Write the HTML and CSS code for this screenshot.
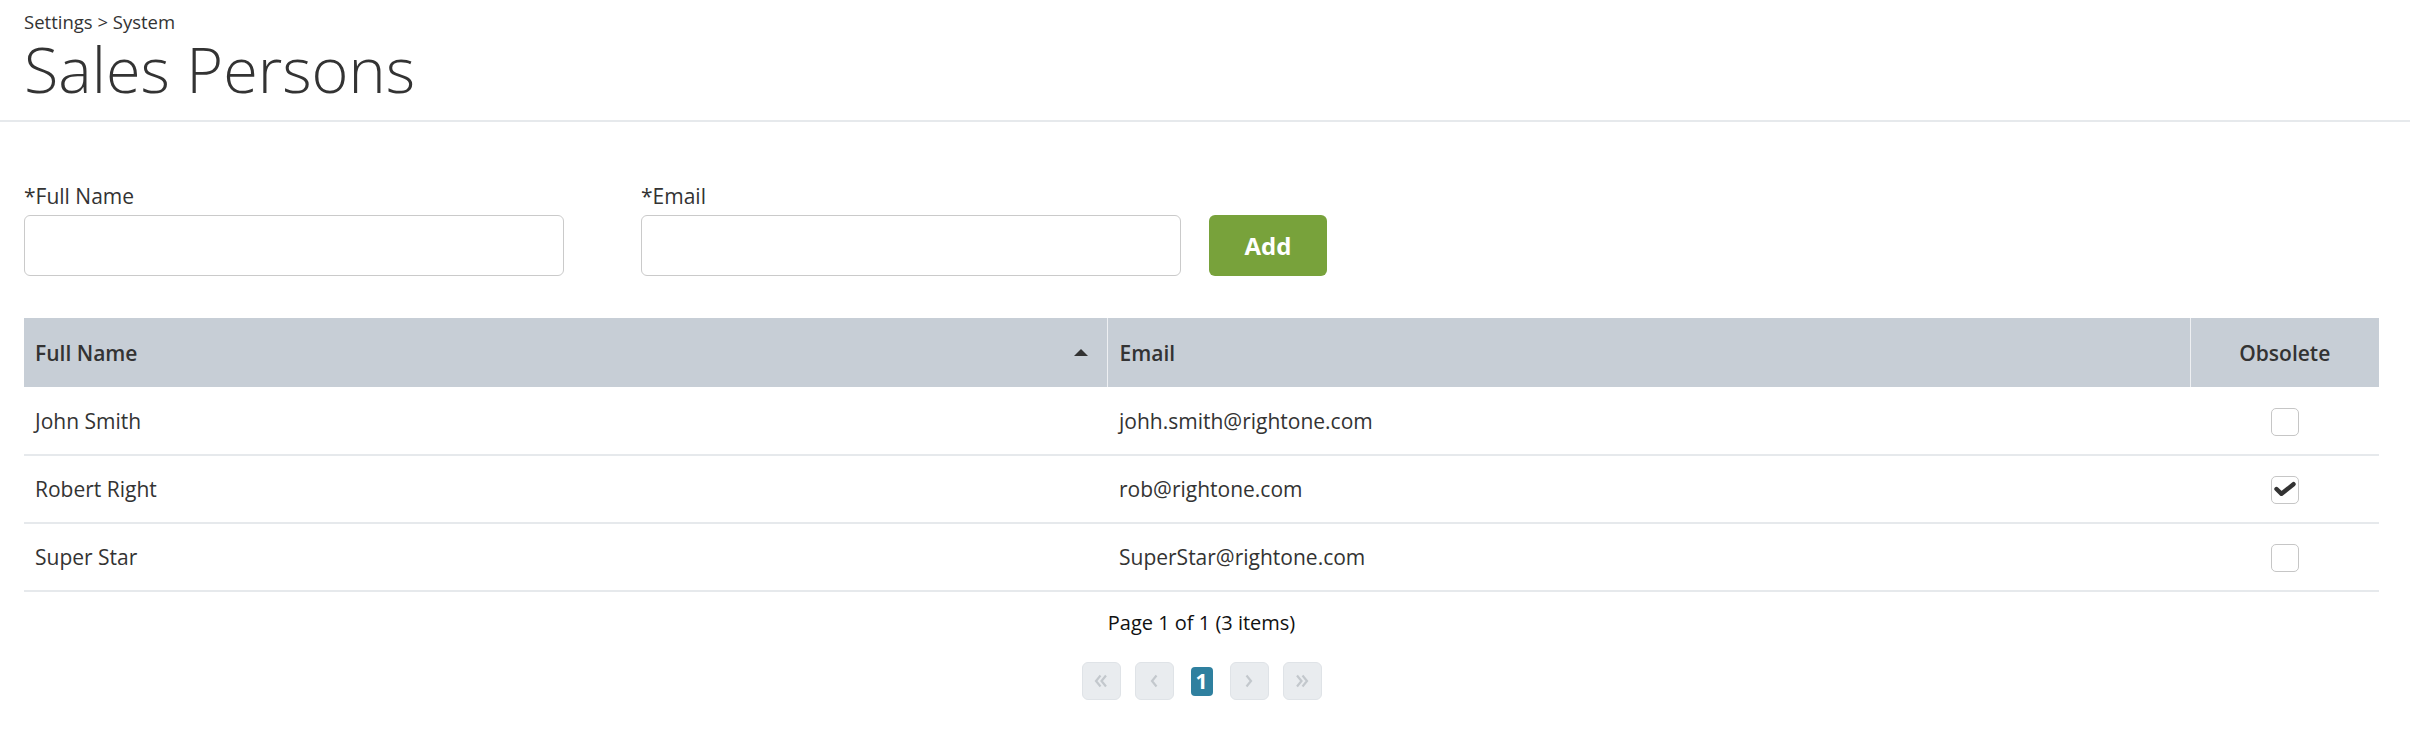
FILE: index.html
```html
<!DOCTYPE html>
<html lang="en">
<head>
<meta charset="utf-8">
<title>Sales Persons</title>
<link rel="stylesheet" href="styles.css">
</head>
<body>
<header class="page-header">
  <div class="breadcrumb">Settings &gt; System</div>
  <h1 class="page-title">Sales Persons</h1>
</header>
<main class="content">
  <form class="add-form">
    <div class="field field-name">
      <label class="field-label">*Full Name</label>
      <input class="field-input" type="text">
    </div>
    <div class="field field-email">
      <label class="field-label">*Email</label>
      <input class="field-input" type="text">
    </div>
    <button class="btn-add" type="button">Add</button>
  </form>

  <table class="grid">
    <colgroup>
      <col>
      <col>
      <col class="col-obsolete">
    </colgroup>
    <thead>
      <tr>
        <th class="th-name"><span class="th-inner"><span>Full Name</span><span class="sort-up"></span></span></th>
        <th class="th-email">Email</th>
        <th class="th-obsolete">Obsolete</th>
      </tr>
    </thead>
    <tbody>
      <tr>
        <td>John Smith</td>
        <td class="td-email">johh.smith@rightone.com</td>
        <td class="td-check"><span class="checkbox"></span></td>
      </tr>
      <tr>
        <td>Robert Right</td>
        <td class="td-email">rob@rightone.com</td>
        <td class="td-check"><span class="checkbox checked"><svg class="check-icon" viewBox="0 0 26 26" width="26" height="26"><path d="M4.5 12 L9.5 16.8 L21.5 7.2" fill="none" stroke="#333" stroke-width="4.4" stroke-linecap="round" stroke-linejoin="round"/></svg></span></td>
      </tr>
      <tr>
        <td>Super Star</td>
        <td class="td-email">SuperStar@rightone.com</td>
        <td class="td-check"><span class="checkbox"></span></td>
      </tr>
    </tbody>
  </table>

  <div class="pager">
    <div class="pager-info">Page 1 of 1 (3 items)</div>
    <div class="pager-nav">
      <span class="pager-btn"><svg viewBox="0 0 16 14" width="16" height="14"><path d="M7.5 1.5 L3 7 L7.5 12.5 M13 1.5 L8.5 7 L13 12.5" fill="none" stroke="#c3c8cd" stroke-width="2.2"/></svg></span>
      <span class="pager-btn"><svg viewBox="0 0 10 14" width="10" height="14"><path d="M7.5 1.5 L3 7 L7.5 12.5" fill="none" stroke="#c3c8cd" stroke-width="2.2"/></svg></span>
      <span class="pager-page">1</span>
      <span class="pager-btn"><svg viewBox="0 0 10 14" width="10" height="14"><path d="M2.5 1.5 L7 7 L2.5 12.5" fill="none" stroke="#c3c8cd" stroke-width="2.2"/></svg></span>
      <span class="pager-btn"><svg viewBox="0 0 16 14" width="16" height="14"><path d="M3 1.5 L7.5 7 L3 12.5 M8.5 1.5 L13 7 L8.5 12.5" fill="none" stroke="#c3c8cd" stroke-width="2.2"/></svg></span>
    </div>
  </div>
</main>
</body>
</html>
```

FILE: styles.css
```css
* { box-sizing: border-box; }

html, body {
  margin: 0;
  padding: 0;
  background: #ffffff;
}

body {
  font-family: "Open Sans", "Liberation Sans", sans-serif;
  color: #333333;
  font-size: 21px;
}

.page-header {
  padding: 13px 24px 20px;
  border-bottom: 2px solid #e6e9ec;
}

.breadcrumb {
  font-size: 18.5px;
  line-height: 18px;
  color: #333;
}

.page-title {
  margin: 6px 0 0;
  font-size: 63px;
  line-height: 63px;
  font-weight: 300;
  color: #333;
}

.content {
  padding: 64px 31px 0 24px;
}

.add-form {
  display: flex;
  align-items: flex-end;
  margin: 0;
}

.field {
  display: flex;
  flex-direction: column;
  width: 540px;
}

.field-name { margin-right: 77px; }
.field-email { margin-right: 28px; }

.field-label {
  font-size: 21px;
  line-height: 21px;
  margin-bottom: 8px;
  color: #333;
}

.field-input {
  height: 61px;
  border: 1px solid #cacaca;
  border-radius: 6px;
  background: #fff;
  font: inherit;
  padding: 0 12px;
}

.btn-add {
  width: 118px;
  height: 61px;
  border: none;
  border-radius: 6px;
  background: #78a23b;
  color: #fff;
  font-family: inherit;
  font-size: 24px;
  font-weight: 700;
}

.grid {
  width: 100%;
  margin-top: 42px;
  border-collapse: collapse;
  table-layout: fixed;
}

.col-obsolete { width: 189px; }

.grid th {
  height: 69px;
  background: #c7ced6;
  font-weight: 600;
  font-size: 21px;
  text-align: left;
  padding: 0 11px;
  color: #333;
}

.grid th + th { border-left: 1px solid #eef0f3; }

.th-name { padding-right: 19px !important; }

.th-inner {
  display: flex;
  align-items: center;
  justify-content: space-between;
}

.sort-up {
  width: 0;
  height: 0;
  border-left: 7px solid transparent;
  border-right: 7px solid transparent;
  border-bottom: 7px solid #333;
}

.th-email { padding-left: 12px !important; }
.grid .th-obsolete { text-align: center; }

.grid td {
  height: 68px;
  padding: 0 11px;
  border-bottom: 2px solid #e6e9ec;
  font-size: 21px;
  color: #333;
  vertical-align: middle;
}

.grid .td-email { padding-left: 12px; }
.grid .td-check { text-align: center; }

.checkbox {
  display: inline-flex;
  align-items: center;
  justify-content: center;
  width: 28px;
  height: 28px;
  border: 1px solid #c6c6c6;
  border-radius: 5px;
  background: #fff;
  vertical-align: middle;
}

.check-icon { display: block; }

.pager {
  display: flex;
  flex-direction: column;
  align-items: center;
  padding-top: 21px;
}

.pager-info {
  font-size: 20px;
  line-height: 20px;
  color: #111;
}

.pager-nav {
  display: flex;
  align-items: center;
  margin-top: 29px;
}

.pager-btn {
  display: inline-flex;
  align-items: center;
  justify-content: center;
  width: 39px;
  height: 38px;
  background: #e9ecef;
  border: 1px solid #dfe3e7;
  border-radius: 6px;
  margin: 0 7px;
}

.pager-page {
  display: inline-flex;
  align-items: center;
  justify-content: center;
  width: 22px;
  height: 29px;
  margin: 0 10px;
  background: #2f809f;
  color: #fff;
  border-radius: 4px;
  font-size: 21px;
  font-weight: 700;
}
```
